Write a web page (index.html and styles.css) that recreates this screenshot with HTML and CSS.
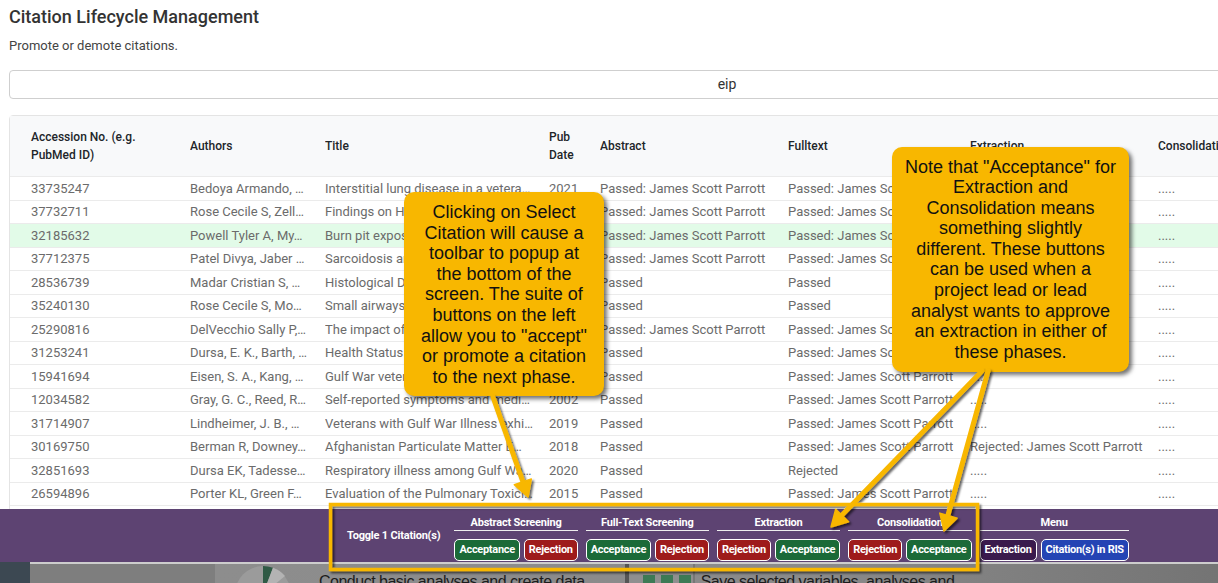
FILE: index.html
```html
<!DOCTYPE html>
<html>
<head>
<meta charset="utf-8">
<title>Citation Lifecycle Management</title>
<link rel="stylesheet" href="styles.css">
</head>
<body>
<div class="page">
  <h1 class="title">Citation Lifecycle Management</h1>
  <p class="subtitle">Promote or demote citations.</p>
  <div class="search">eip</div>
  <div class="card">
    <div class="row head">
      <div>Accession No. (e.g.<br>PubMed ID)</div>
      <div>Authors</div>
      <div>Title</div>
      <div>Pub<br>Date</div>
      <div>Abstract</div>
      <div>Fulltext</div>
      <div>Extraction</div>
      <div>Consolidation</div>
    </div>
    <div class="row"><div>33735247</div><div>Bedoya Armando, …</div><div>Interstitial lung disease in a vetera…</div><div>2021</div><div>Passed: James Scott Parrott</div><div>Passed: James Scott Parrott</div><div>.....</div><div>.....</div></div>
    <div class="row"><div>37732711</div><div>Rose Cecile S, Zell…</div><div>Findings on High-Resolution Co…</div><div>2023</div><div>Passed: James Scott Parrott</div><div>Passed: James Scott Parrott</div><div>.....</div><div>.....</div></div>
    <div class="row selected"><div>32185632</div><div>Powell Tyler A, My…</div><div>Burn pit exposure in military…</div><div>2020</div><div>Passed: James Scott Parrott</div><div>Passed: James Scott Parrott</div><div>.....</div><div>.....</div></div>
    <div class="row"><div>37712375</div><div>Patel Divya, Jaber …</div><div>Sarcoidosis and lung function…</div><div>2023</div><div>Passed: James Scott Parrott</div><div>Passed: James Scott Parrott</div><div>.....</div><div>.....</div></div>
    <div class="row"><div>28536739</div><div>Madar Cristian S, …</div><div>Histological Diagnosis of Mil…</div><div>2017</div><div>Passed</div><div>Passed</div><div>.....</div><div>.....</div></div>
    <div class="row"><div>35240130</div><div>Rose Cecile S, Mo…</div><div>Small airways disease in milit…</div><div>2022</div><div>Passed</div><div>Passed</div><div>.....</div><div>.....</div></div>
    <div class="row"><div>25290816</div><div>DelVecchio Sally P,…</div><div>The impact of deployment on…</div><div>2015</div><div>Passed: James Scott Parrott</div><div>Passed: James Scott Parrott</div><div>.....</div><div>.....</div></div>
    <div class="row"><div>31253241</div><div>Dursa, E. K., Barth, …</div><div>Health Status of Gulf War and…</div><div>2019</div><div>Passed</div><div>Passed: James Scott Parrott</div><div>.....</div><div>.....</div></div>
    <div class="row"><div>15941694</div><div>Eisen, S. A., Kang, …</div><div>Gulf War veterans' health: me…</div><div>2005</div><div>Passed</div><div>Passed: James Scott Parrott</div><div>.....</div><div>.....</div></div>
    <div class="row"><div>12034582</div><div>Gray, G. C., Reed, R…</div><div>Self-reported symptoms and medi…</div><div>2002</div><div>Passed</div><div>Passed: James Scott Parrott</div><div>.....</div><div>.....</div></div>
    <div class="row"><div>31714907</div><div>Lindheimer, J. B., …</div><div>Veterans with Gulf War Illness exhi…</div><div>2019</div><div>Passed</div><div>Passed: James Scott Parrott</div><div>.....</div><div>.....</div></div>
    <div class="row"><div>30169750</div><div>Berman R, Downey…</div><div>Afghanistan Particulate Matter E…</div><div>2018</div><div>Passed</div><div>Passed: James Scott Parrott</div><div>Rejected: James Scott Parrott</div><div>.....</div></div>
    <div class="row"><div>32851693</div><div>Dursa EK, Tadesse…</div><div>Respiratory illness among Gulf Wa…</div><div>2020</div><div>Passed</div><div>Rejected</div><div>.....</div><div>.....</div></div>
    <div class="row"><div>26594896</div><div>Porter KL, Green F…</div><div>Evaluation of the Pulmonary Toxici…</div><div>2015</div><div>Passed</div><div>Passed: James Scott Parrott</div><div>.....</div><div>.....</div></div>
    <div class="row"><div>30125462</div><div>Szema AM, Mirsaidi…</div><div>Deployment-related lung disease…</div><div>2017</div><div>Passed</div><div>Passed</div><div>.....</div><div>.....</div></div>
    <div class="row"><div>29210231</div><div>Morris MJ, Walter…</div><div>Evaluation of exertional dyspnea…</div><div>2016</div><div>Passed</div><div>Passed</div><div>.....</div><div>.....</div></div>
  </div>
</div>

<div class="callout callout-a">Clicking on Select<br>Citation will cause a<br>toolbar to popup at<br>the bottom of the<br>screen. The suite of<br>buttons on the left<br>allow you to "accept"<br>or promote a citation<br>to the next phase.</div>
<div class="callout callout-b">Note that "Acceptance" for<br>Extraction and<br>Consolidation means<br>something slightly<br>different. These buttons<br>can be used when a<br>project lead or lead<br>analyst wants to approve<br>an extraction in either of<br>these phases.</div>

<div class="dock">
  <div class="toolbar">
    <div class="toggle">Toggle 1 Citation(s)</div>
    <div class="group">
      <div class="group-title">Abstract Screening</div>
      <div class="btns"><span class="btn ok">Acceptance</span><span class="btn no">Rejection</span></div>
    </div>
    <div class="group">
      <div class="group-title">Full-Text Screening</div>
      <div class="btns"><span class="btn ok">Acceptance</span><span class="btn no">Rejection</span></div>
    </div>
    <div class="group">
      <div class="group-title">Extraction</div>
      <div class="btns"><span class="btn no">Rejection</span><span class="btn ok">Acceptance</span></div>
    </div>
    <div class="group">
      <div class="group-title">Consolidation</div>
      <div class="btns"><span class="btn no">Rejection</span><span class="btn ok">Acceptance</span></div>
    </div>
    <div class="group">
      <div class="group-title">Menu</div>
      <div class="btns"><span class="btn plum">Extraction</span><span class="btn blue">Citation(s) in RIS</span></div>
    </div>
  </div>
  <div class="backdrop">
    <div class="bd-slate"></div>
    <div class="bd-gray"></div>
    <div class="bd-rest">
      <svg class="pie" width="60" height="21" viewBox="0 0 60 21">
        <circle cx="30" cy="30" r="28" fill="#9b9b9b"/>
        <path d="M30 30 L30 2 A28 28 0 0 1 40 3.8 Z" fill="#2f5a45"/>
        <path d="M30 30 L40 3.8 A28 28 0 0 1 52 12 Z" fill="#b3b3b3"/>
      </svg>
      <span class="bd-text">Conduct basic analyses and create data</span>
      <div class="bd-icon"><i></i><i></i><i></i></div>
      <span class="bd-text">Save selected variables, analyses and</span>
    </div>
  </div>
</div>

<svg class="annot" width="1218" height="583" viewBox="0 0 1218 583">
  <defs>
    <filter id="sh" x="-20%" y="-20%" width="140%" height="140%">
      <feDropShadow dx="2" dy="2" stdDeviation="1" flood-color="#000" flood-opacity="0.6"/>
    </filter>
  </defs>
  <g filter="url(#sh)">
    <rect x="330.5" y="504.5" width="647" height="65" fill="none" stroke="#f8b700" stroke-width="3.5"/>
    <line x1="493" y1="397" x2="523" y2="482" stroke="#f8b700" stroke-width="5" stroke-linecap="round"/>
    <polygon points="528,497 514.3,484.7 531.3,478.9" fill="#f8b700" stroke="#f8b700" stroke-width="1.5" stroke-linejoin="round"/>
    <line x1="982" y1="371" x2="842" y2="515" stroke="#f8b700" stroke-width="5" stroke-linecap="round"/>
    <polygon points="831,527 848.6,521.8 835.7,509.2" fill="#f8b700" stroke="#f8b700" stroke-width="1.5" stroke-linejoin="round"/>
    <line x1="988" y1="371" x2="948" y2="515" stroke="#f8b700" stroke-width="5" stroke-linecap="round"/>
    <polygon points="944,531 957.1,518.1 939.8,513.1" fill="#f8b700" stroke="#f8b700" stroke-width="1.5" stroke-linejoin="round"/>
  </g>
</svg>
</body>
</html>
```

FILE: styles.css
```css
* { box-sizing: border-box; }

html, body {
  margin: 0;
  height: 100%;
}

body {
  font-family: Roboto, "Liberation Sans", sans-serif;
  background: #fff;
  color: #333;
  overflow: hidden;
}

.page {
  width: 1454px;
  padding: 0 9px;
}

.title {
  margin: 0;
  padding-top: 6px;
  font-size: 18px;
  line-height: 22px;
  font-weight: 500;
  color: #333;
}

.subtitle {
  margin: 9px 0 0;
  font-size: 13px;
  line-height: 18px;
  color: #444;
}

.search {
  margin-top: 15px;
  height: 29px;
  border: 1px solid #cfcfcf;
  border-radius: 4px;
  text-align: center;
  font-size: 14px;
  line-height: 27px;
  color: #333;
}

.card {
  margin-top: 16px;
  border: 1px solid #e4e4e4;
  border-radius: 4px 4px 0 0;
}

.row {
  display: grid;
  grid-template-columns: 180px 135px 224px 51px 188px 182px 188px 1fr;
  height: 23.5px;
  border-bottom: 1px solid #ebebeb;
  align-items: center;
  font-size: 13px;
  color: #6b6b6b;
  white-space: nowrap;
}

.row > div {
  overflow: hidden;
}

.row > div:first-child {
  padding-left: 21px;
}

.head {
  height: 61px;
  background: #f8f9fa;
  color: #212529;
  font-size: 12px;
  font-weight: 500;
  line-height: 18px;
}

.selected {
  background: #e2fbe8;
}

.callout {
  position: absolute;
  z-index: 4;
  background: #f8b700;
  border-radius: 10px;
  box-shadow: 3px 3px 4px rgba(0, 0, 0, 0.55);
  font-family: "Liberation Sans", Arial, sans-serif;
  font-size: 18px;
  line-height: 20.6px;
  color: #111;
  text-align: center;
  white-space: nowrap;
}

.callout-a {
  left: 404px;
  top: 192px;
  width: 200px;
  height: 204px;
  padding-top: 10px;
}

.callout-b {
  left: 892px;
  top: 147px;
  width: 237px;
  height: 225px;
  padding-top: 9.5px;
}

.dock {
  position: fixed;
  left: 0;
  bottom: 0;
  width: 100%;
  z-index: 5;
}

.toolbar {
  height: 53px;
  background: #5d4372;
  display: flex;
  align-items: flex-start;
  gap: 8px;
  padding: 7px 0 0 347px;
}

.toggle {
  margin-top: 13px;
  margin-right: 6px;
  font-size: 11px;
  font-weight: 700;
  line-height: 14px;
  color: #fff;
  white-space: nowrap;
  letter-spacing: -0.2px;
}

.group {
  display: flex;
  flex-direction: column;
}

.group-title {
  font-size: 11px;
  font-weight: 700;
  line-height: 14px;
  color: #fff;
  text-align: center;
  border-bottom: 1px solid #eee;
  white-space: nowrap;
  letter-spacing: -0.2px;
}

.btns {
  display: flex;
  gap: 4px;
  margin-top: 8px;
}

.btn {
  height: 22px;
  padding: 0 4px;
  border: 1px solid #fff;
  border-radius: 5px;
  font-size: 11px;
  font-weight: 700;
  line-height: 20px;
  color: #fff;
  white-space: nowrap;
  letter-spacing: -0.3px;
}

.ok { background: #1b6a38; }
.no { background: #9e1b1b; }
.plum { background: #3a1a4d; }
.blue { background: #2444b4; }

.backdrop {
  height: 21px;
  display: flex;
  overflow: hidden;
}

.bd-slate {
  width: 30px;
  background: #3c4852;
}

.bd-gray {
  width: 185px;
  background: #7e7e7e;
  border-top: 2px solid #cdcdcd;
}

.bd-rest {
  flex: 1;
  display: flex;
  align-items: flex-start;
  background: linear-gradient(90deg, #8d8d8d 0%, #8a8a8a 60%, #747474 100%);
  border-top: 2px solid #cdcdcd;
}

.pie {
  margin-left: 18px;
  flex: none;
}

.bd-text {
  margin-left: 26px;
  margin-top: 8px;
  font-family: "Liberation Sans", Arial, sans-serif;
  font-size: 16px;
  line-height: 20px;
  color: #1c1c1c;
  white-space: nowrap;
  letter-spacing: -0.5px;
}

.bd-icon {
  margin-left: 40px;
  width: 70px;
  height: 19px;
  border-left: 4px solid #555;
  border-right: 2px solid #777;
  display: flex;
  gap: 6px;
  align-items: flex-end;
  padding: 0 0 0 14px;
  background: #8f8f8f;
  margin-right: -20px;
}

.bd-icon i {
  width: 12px;
  height: 8px;
  background: #3d7a55;
}

.annot {
  position: fixed;
  top: 0;
  left: 0;
  z-index: 10;
  pointer-events: none;
}
```
